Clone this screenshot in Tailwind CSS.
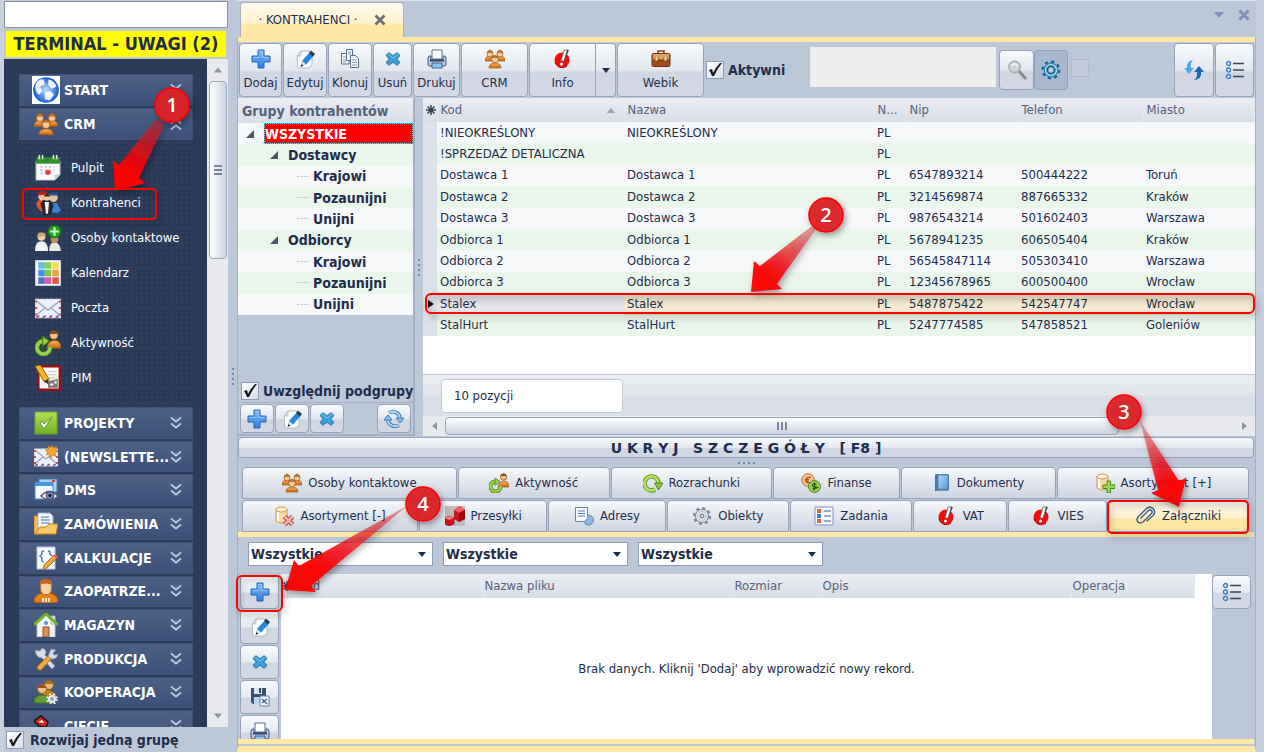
<!DOCTYPE html>
<html lang="pl">

<head>
    <meta charset="utf-8" />
    <meta content="width=device-width, initial-scale=1" name="viewport" />
    <title>Kontrahenci</title>
    <script src="https://cdn.jsdelivr.net/npm/@tailwindcss/browser@4"></script>
</head>

<body class="relative h-screen min-h-[752px] overflow-hidden bg-[#bcc7d8] font-['DejaVu_Sans_Condensed','Noto_Sans',sans-serif] text-[13px] leading-4 text-[#1e2d4b]">

    <!-- Icon sprite -->
    <svg class="absolute size-0" aria-hidden="true">
        <defs>
            <linearGradient id="gBlue" x1="0" y1="0" x2="0" y2="1"><stop offset="0" stop-color="#86bdf8" /><stop offset="1" stop-color="#2f7de0" /></linearGradient>
            <linearGradient id="gOrange" x1="0" y1="0" x2="0" y2="1"><stop offset="0" stop-color="#f6b765" /><stop offset="1" stop-color="#c9660f" /></linearGradient>
            <linearGradient id="gGreen" x1="0" y1="0" x2="0" y2="1"><stop offset="0" stop-color="#b5de5a" /><stop offset="1" stop-color="#6fb01f" /></linearGradient>
            <linearGradient id="gBook" x1="0" y1="0" x2="1" y2="1"><stop offset="0" stop-color="#b9e0fa" /><stop offset="1" stop-color="#4a95dc" /></linearGradient>
            <radialGradient id="gGlobe"><stop offset="0" stop-color="#bfe6ff" /><stop offset="1" stop-color="#1657d8" /></radialGradient>
        </defs>
        <symbol id="plus" viewBox="0 0 20 20"><path d="M7 1h6v6h6v6h-6v6H7v-6H1V7h6z" fill="url(#gBlue)" stroke="#2462c4" /><path d="M8.500 2.500h3v6h6M2.500 8.500h6" fill="none" stroke="#a9d2fd" opacity=".7" /></symbol>
        <symbol id="edit" viewBox="0 0 20 20"><path d="M6 2h9l2 3v11l-3 3H3L2 8z" fill="#fdfdfe" stroke="#b3b9c4" /><path d="M6 2v5H2z" fill="#d9dde4" stroke="#aab0bb" stroke-width=".6" /><path d="M6 17l1-5 8-9 4 3.500-8 9z" fill="#2488dd" /><path d="M14 4l2-2.500L20 5l-2.200 2.500z" fill="#2e3c50" /><path d="M6 17l1-5 4 3.500z" fill="#e3e9f2" /><path d="M5.500 18l1-3 2 1.700z" fill="#1d2a40" /></symbol>
        <symbol id="clone" viewBox="0 0 20 20"><g fill="#f6f8fb" stroke="#5c708e"><path d="M1.500 4.500h5V9H9v6H1.500z" /><path d="M6.500.500h6v11h-6z" /><path d="M10.500 6.500h5l3 3v9h-8z" /></g><path d="M12 11h5M12 13.500h5M12 16h5M8 3h3M8 5h3M3 8h3M3 11h3M3 13h3" stroke="#7e95b5" stroke-width="1" /></symbol>
        <symbol id="del" viewBox="0 0 20 20"><path d="M6 4l4 3 4-3 2.500 2.500-3 3.500 3 3.500L14 16l-4-3-4 3-2.500-2.500 3-3.500-3-3.500z" fill="#3fa2dc" stroke="#3689bd" stroke-width="1.500" stroke-linejoin="round" /><path d="M5.500 5.500L10 9l4.500-3.500" stroke="#7cc9f0" fill="none" /></symbol>
        <symbol id="print" viewBox="0 0 20 20"><path d="M2 7h2v4h12V7h2l1 2v7l-1 1H2l-1-1V9z" fill="#b9c8e2" stroke="#46587a" /><path d="M5 1h10v9H5z" fill="#fbfdff" stroke="#5b6e92" /><path d="M3 10.500h14v2H3z" fill="#33425e" /><path d="M5 14h10v5H5z" fill="#8dc5ee" stroke="#45628a" /></symbol>
        <symbol id="people" viewBox="0 0 20 20"><g fill="url(#gOrange)" stroke="#a35913" stroke-width=".7"><path d="M0 12q0-5 5-5h10q5 0 5 5z" /><path d="M4 19q0-5 6-5t6 5z" /></g><g fill="#f5cb96" stroke="#9c561a" stroke-width=".7"><circle cx="5" cy="5" r="3" /><circle cx="15" cy="5" r="3" /><circle cx="10" cy="10.500" r="3.300" /></g><path d="M2 4q3-6 6 0M12 4q3-6 6 0M6.500 9q3.500-5 7 0" fill="#c27a30" stroke="#9a5618" stroke-width=".7" /></symbol>
        <symbol id="info" viewBox="0 0 20 20"><circle cx="9" cy="11" r="7.500" fill="#f20d0d" /><path d="M2 13a7.500 7.500 0 0 0 12 4" stroke="#a80000" fill="none" /><path d="M11 1h4l-4 11H8z" fill="#f6f6f6" stroke="#666" stroke-width=".8" /><path d="M14 1h2l-5 11z" fill="#444" /><circle cx="8.500" cy="15" r="1.600" fill="#fff" /></symbol>
        <symbol id="case" viewBox="0 0 20 20"><path d="M7 5V2h6v3" fill="none" stroke="#86461a" stroke-width="1.600" /><rect x="1" y="4.500" width="18" height="13" rx="1.500" fill="#a24c1d" stroke="#743210" /><path d="M2 5h16v6H2z" fill="#dfa262" /><path d="M2 11h16" stroke="#6f300f" /><path d="M4 8v4h3V8M13 8v4h3V8" fill="#fbe7a8" stroke="#7c4a18" stroke-width=".8" /></symbol>
        <symbol id="search" viewBox="0 0 20 20"><path d="M12 11l6 7" stroke="#8b8b8b" stroke-width="3" stroke-linecap="round" /><circle cx="7.500" cy="7" r="5.700" fill="#cfd2d5" stroke="#a9acb0" stroke-width="1.500" /><path d="M4 6q3-4 7 0" stroke="#f4f4f4" stroke-width="1.500" fill="none" /></symbol>
        <symbol id="gearBlue" viewBox="0 0 20 20"><circle cx="10" cy="10" r="8.300" fill="none" stroke="#1a6288" stroke-width="2.400" stroke-dasharray="3.200 3.320" /><circle cx="10" cy="10" r="6.800" fill="#bfe0f0" stroke="#2b8dbb" stroke-width="1.400" /><circle cx="10" cy="10" r="3.700" fill="#bccadf" stroke="#11638c" stroke-width="2" /></symbol>
        <symbol id="gear" viewBox="0 0 20 20"><circle cx="10" cy="10" r="7.800" fill="none" stroke="#7d8798" stroke-width="2.500" stroke-dasharray="3 3.120" /><circle cx="10" cy="10" r="6.500" fill="#e9edf4" stroke="#768093" /><circle cx="10" cy="10" r="2" fill="#d0d6e2" stroke="#59657b" /><circle cx="10" cy="10" r="4.300" fill="none" stroke="#b3bccb" /></symbol>
        <symbol id="swap" viewBox="0 0 20 20"><path d="M9 0Q2 1 3 8H0l5 6 5-6H7Q6 3 9 0z" fill="#4aa9e8" /><path d="M10 20q8-1 7-8h3l-5-6-5 6h3q1 5-3 8z" fill="#1467b3" /></symbol>
        <symbol id="list" viewBox="0 0 20 20"><g fill="#dbe9fb" stroke="#3f77c8" stroke-width="1.300"><circle cx="3.500" cy="3.500" r="2" /><circle cx="3.500" cy="10" r="2" /><circle cx="3.500" cy="16.500" r="2" /></g><path d="M8 3.500h11M8 10h11M8 16.500h11" stroke="#3b465a" stroke-width="1.500" /></symbol>
        <symbol id="reload" viewBox="0 0 20 20"><g fill="none" stroke="#3b78b8" stroke-width="3.600"><path d="M5 4a7 6.500 0 0 1 11 5M15 16a7 6.500 0 0 1-11-5" /></g><g fill="none" stroke="#b5dbf6" stroke-width="1.800"><path d="M5 4a7 6.500 0 0 1 11 5M15 16a7 6.500 0 0 1-11-5" /></g><path d="M12 9h8l-4 5zM8 11H0l4-5z" fill="#8cc4ee" stroke="#3b78b8" /></symbol>
        <symbol id="activity" viewBox="0 0 20 20"><circle cx="14.500" cy="4" r="3.200" fill="#f3c18a" stroke="#8a4b17" stroke-width=".7" /><path d="M11 3q3.500-5 7 0z" fill="#8a4b17" /><path d="M9 14q1-6 6-6t5 6z" fill="url(#gOrange)" stroke="#9b530f" stroke-width=".7" /><path d="M6 8.500A5 5 0 1 0 11.500 13" fill="none" stroke="#4c8614" stroke-width="4" /><path d="M6 8.500A5 5 0 1 0 11.500 13" fill="none" stroke="#9bd245" stroke-width="2.600" /><path d="M6 5l5 3.500-5 4z" fill="#9bd245" stroke="#4c8614" stroke-width=".8" /></symbol>
        <symbol id="recycle" viewBox="0 0 20 20"><path d="M12 16.500A7 7 0 1 1 15.500 10" fill="none" stroke="#5b9119" stroke-width="4.400" /><path d="M12 16.500A7 7 0 1 1 15.500 10" fill="none" stroke="#b7e05f" stroke-width="2.800" /><path d="M11.500 10H20l-4.500 7z" fill="#8ccb36" stroke="#4f8616" /></symbol>
        <symbol id="coins" viewBox="0 0 20 20"><circle cx="7" cy="7" r="6.300" fill="#f7c29a" stroke="#c9702e" /><path d="M10 4.500q-5-1-5 2.500t5 2.500M4 6.500h4M4 8h4" fill="none" stroke="#a64b10" stroke-width="1.200" /><circle cx="13.500" cy="13.500" r="6" fill="#9ed04d" stroke="#4f8b1a" /><path d="M15.500 11.200q-4-1-4 1t4 2-4 1.600M13.500 9.500v8" fill="none" stroke="#2f5d0b" stroke-width="1.200" /></symbol>
        <symbol id="book" viewBox="0 0 20 20"><path d="M3 1h14v17H3z" fill="#eef4fb" stroke="#46617f" /><path d="M3 1h14v16H5q-2 0-2 2z" fill="url(#gBook)" stroke="#2e6aa8" /><path d="M3 1h3v17H3z" fill="#4e7aa5" /></symbol>
        <symbol id="db" viewBox="0 0 20 20"><path d="M2 3v12q5 4 11 0V3z" fill="#f7dca6" stroke="#cf9b50" /><ellipse cx="7.500" cy="3.500" rx="5.500" ry="2.500" fill="#fff3d6" stroke="#cf9b50" /><path d="M4 6v9" stroke="#fff" stroke-width="2" /></symbol>
        <symbol id="dbAdd" viewBox="0 0 20 20"><use href="#db" /><path d="M12 8h3.500v4H20v3.500h-4.500V20H12v-4.500H8V12h4z" fill="#9fd84a" stroke="#47851a" /></symbol>
        <symbol id="dbDel" viewBox="0 0 20 20"><use href="#db" /><path d="M10.500 10.500l8 8M18.500 10.500l-8 8" stroke="#b5302a" stroke-width="4.500" /><path d="M10.500 10.500l8 8M18.500 10.500l-8 8" stroke="#f3b6ae" stroke-width="2.500" /></symbol>
        <symbol id="boxes" viewBox="0 0 20 20"><path d="M0 0h20v20H0z" fill="#bdbdbd" /><path d="M9 4l6-4 5 4v9l-6 3-5-3z" fill="#d01220" /><path d="M9 4l6-4 5 4-6 3z" fill="#f25b5b" /><path d="M14 7v9l6-3V4z" fill="#9e0712" /><path d="M0 12l4-2 5 2v6l-5 2-4-2z" fill="#d01220" stroke="#7e0810" stroke-width=".6" /><path d="M0 12l4-2 5 2-5 2z" fill="#f58080" /></symbol>
        <symbol id="card" viewBox="0 0 20 20"><circle cx="14.500" cy="14" r="5" fill="#8fb7e6" stroke="#5e86bb" /><path d="M1.500 1.500h12v11l-3 3h-9z" fill="#f7faff" stroke="#6880b8" /><path d="M4 5h7M4 7.500h7M4 10h7" stroke="#5c77b5" /></symbol>
        <symbol id="tasks" viewBox="0 0 20 20"><path d="M1 1h18v18H1z" fill="#f8faff" stroke="#7d93c2" /><path d="M3 3h4v4H3z" fill="#e0663c" /><path d="M3 8h4v4H3z" fill="#3f87d8" /><path d="M3 13h4v4H3z" fill="#e0663c" /><path d="M10 5h7M10 10h7M10 15h7" stroke="#7c8fb8" stroke-width="1.300" /></symbol>
        <symbol id="clip" viewBox="0 0 20 20"><path d="M5 12l7-7q2-2 3.500-.500T15 8l-8 8q-3 2-5 0t0-5l8-8q4-3.500 7-.500t.500 6.500L11 15" fill="none" stroke="#44618a" stroke-width="1.500" stroke-linecap="round" /></symbol>
        <symbol id="save" viewBox="0 0 20 20"><path d="M1 1h15v16H3l-2-2z" fill="#3c4e6c" /><path d="M4 1h8v6H4z" fill="#dfe6f0" /><path d="M9 1h2v5H9z" fill="#33445f" /><path d="M4 10h9v7H4z" fill="#b5d7ee" /><path d="M10 9h9v10h-9z" fill="#eef4fa" stroke="#6b80a0" /><path d="M12 12l5 5M17 12l-5 4" stroke="#4a658c" stroke-width="1.300" /></symbol>
        <!-- sidebar icons -->
        <symbol id="globe" viewBox="0 0 24 24"><path d="M0 0h24v24H0z" fill="#fff" /><circle cx="12" cy="12" r="11" fill="url(#gGlobe)" /><path d="M3 7q3-5 7-4l1 4-4 2 2 4-3 3q-4-3-3-9M14 3q5 1 7 6l-4 2-3-3zM11 14l5-1 3 3-4 5-4-1z" fill="#fff" opacity=".9" /></symbol>
        <symbol id="cal" viewBox="0 0 24 24"><path d="M1 6h22v12l-5 5H1z" fill="#fafafa" stroke="#c7cfc9" /><path d="M1 2h22v6H1z" fill="#2f8d31" /><path d="M4 0v4M7 0v4M17 0v4M20 0v4" stroke="#dfe6df" stroke-width="1.500" /><path d="M5 11h13M5 14h13M5 17h10" stroke="#cdbfe0" stroke-width="1.500" stroke-dasharray="2 2" /><circle cx="12" cy="16" r="2.500" fill="#e24444" /><path d="M18 23v-5h5z" fill="#cbd0d8" /></symbol>
        <symbol id="contractors" viewBox="0 0 24 24"><path d="M1 13q1-4 6-4t6 6l-3 6q-7-1-9-8z" fill="#e8562c" /><circle cx="7" cy="6" r="4" fill="#f0c9a4" /><path d="M2 5q1-5 7-4l3 3z" fill="#c92020" /><circle cx="17" cy="7" r="4" fill="#ecc59b" /><path d="M13 5q4-6 9 0z" fill="#2659a5" /><path d="M14 12h6l4 7-3 2h-7z" fill="#3b83d1" /><path d="M5 13q2-6 7-4t5 6l-2 8H8z" fill="#26272c" /><circle cx="11" cy="7" r="3" fill="#f0cda8" /><path d="M8 6q3-5 6 0z" fill="#33231a" /><path d="M9 11h4l-1 11h-2z" fill="#f4f4f4" /></symbol>
        <symbol id="persons" viewBox="0 0 24 24"><path d="M0 24q0-9 6-9t6 9z" fill="#f3f3f0" /><path d="M13 24q0-8 5-8t6 8z" fill="#ece9e2" /><circle cx="6" cy="11" r="3.500" fill="#f0cfa5" /><path d="M2 11q0-5 4-4 4 0 4 3z" fill="#caa56c" /><circle cx="18" cy="13" r="3.500" fill="#c98c55" /><circle cx="18" cy="6" r="5.800" fill="#22a022" stroke="#137c13" /><path d="M18 2v8M14 6h8" stroke="#c7f7c0" stroke-width="2" /></symbol>
        <symbol id="kal" viewBox="0 0 24 24"><path d="M0 0h24v24H0z" fill="#f4f7fc" stroke="#9eb0d4" /><path d="M3 2h6v6H3z" fill="#5fc0d8" /><path d="M9 2h6v6H9z" fill="#8ed04a" /><path d="M16 2h6v6h-6z" fill="#f2dd51" /><path d="M3 9h6v6H3z" fill="#4d8fe0" /><path d="M9 9h6v6H9z" fill="#7ac943" /><path d="M16 9h6v6h-6z" fill="#f0a040" /><path d="M3 16h6v6H3z" fill="#5b6fc8" /><path d="M9 16h6v6H9z" fill="#dd5bab" /><path d="M16 16h6v6h-6z" fill="#e2583a" /></symbol>
        <symbol id="mail" viewBox="0 0 24 24"><path d="M.500 4h23v17H.500z" fill="#eef1f8" stroke="#d9dff0" /><path d="M1 20.500h22M1 5v15M23 5v15" stroke="#da4a3f" stroke-width="2" stroke-dasharray="2 4" /><path d="M2 19.500h21" stroke="#4b77c9" stroke-width="1.500" stroke-dasharray="2 4" /><path d="M2 6l10 8L22 6M2 18l7-6M22 18l-7-6" fill="none" stroke="#9aa7c2" stroke-width="1.300" /></symbol>
        <symbol id="mailNew" viewBox="0 0 24 24"><use href="#mail" /><path d="M18 0l1.500 3L23 1.500 21.500 5l2.500 1.500-3 1.500 1 3.500-3.500-1.500L17 13l-1.500-3.500L12 10l1.500-3L11 5l3.500-.500L14 1l3 1.500z" fill="#f4a52b" stroke="#c77b13" stroke-width=".6" /></symbol>
        <symbol id="pim" viewBox="0 0 24 24"><path d="M3 1h20v22H3z" fill="#fbf6f4" stroke="#8b1414" stroke-width="2.400" /><path d="M12 6h8M12 9h8M12 12h8" stroke="#c8c8c8" /><path d="M0 1l5-1 8 13-1 4-4-2z" fill="#f5b417" stroke="#805612" stroke-width=".8" /><path d="M8 15l4-2v4z" fill="#333" /><path d="M12 15l9-2v8h-9z" fill="#777" /><path d="M14 17h3v2h-3zM18 15h2v2h-2z" fill="#fff" /></symbol>
        <symbol id="check" viewBox="0 0 24 24"><path d="M1 1h22v22H1z" fill="url(#gGreen)" stroke="#6da826" /><path d="M6 12l4 6L18 6l-8 7-2-3z" fill="#f5f8ec" stroke="#6c8f42" /></symbol>
        <symbol id="dms" viewBox="0 0 24 24"><path d="M5 1h18v13H5z" fill="#a8d0f3" stroke="#477cb9" /><path d="M1 5h18v16H1z" fill="#f5f9fd" stroke="#4e86c2" /><path d="M1 4h18v4H1z" fill="#4697e0" /><path d="M18 3h3" stroke="#e03c30" stroke-width="2" /><path d="M7 18q8-9 17 0-8 8-17 0z" fill="#f6f6fa" stroke="#5d5b74" stroke-width="1.600" /><circle cx="16" cy="17.500" r="4" fill="#708dbd" stroke="#3a425b" /><circle cx="16" cy="17.500" r="1.700" fill="#1e2740" /></symbol>
        <symbol id="folder" viewBox="0 0 24 24"><path d="M0 4h9v18H0z" fill="#eebe57" stroke="#c88c24" /><path d="M4 1h12l3 3v14H4z" fill="#f6f9ff" stroke="#94aad1" /><path d="M7 5h8M7 8h9M7 11h9" stroke="#7d9fd6" stroke-width="1.500" /><path d="M1 22l5-7h6l3-3h9l-2 10z" fill="#f5c96a" stroke="#c98619" /></symbol>
        <symbol id="calc" viewBox="0 0 24 24"><path d="M3 1h18v22H3z" fill="#f4f7fc" stroke="#b6c6df" /><path d="M10 5q-3 0-2 3l-2 2 2 2q-1 4 2 4M14 5q3 0 2 3l2 2" fill="none" stroke="#5f7ab0" stroke-width="1.500" /><path d="M9 24l1-5L20 9l3 3-10 10z" fill="#f2a33c" stroke="#a4601b" stroke-width=".8" /><path d="M19 10l3-1.500 2 2-1.500 2.500z" fill="#e45b6b" /></symbol>
        <symbol id="worker" viewBox="0 0 24 24"><path d="M0 23q0-9 12-9t12 9q-12 3-24 0z" fill="#e78218" stroke="#b75a0a" /><path d="M6 5q6-8 12 0l-1 8q-5 6-10 0z" fill="#f6d1a0" stroke="#b6691e" /><path d="M6 6Q5 0 12 0t6 6q-6-3-12 0z" fill="#c56a1b" /><path d="M9 19v4M12 19v4M15 19v4" stroke="#fff" stroke-width="1.500" /></symbol>
        <symbol id="house" viewBox="0 0 24 24"><path d="M3 10l9-8 9 8v14H3z" fill="#f4f4f4" stroke="#b9bfc9" /><path d="M17 3h4v8h-4z" fill="#e6e6ea" stroke="#b0b4bf" /><path d="M0 12L12 1l12 11" fill="none" stroke="#71b32b" stroke-width="3" /><path d="M9 14h6v10H9z" fill="#d89450" stroke="#94541d" /><circle cx="12" cy="10" r="2" fill="#5d91d9" /></symbol>
        <symbol id="tools" viewBox="0 0 24 24"><path d="M1 3l5 1 2-3q6 2 3 7l10 11-3 3L8 11q-6 0-7-8z" fill="#d9dee8" stroke="#838da0" /><path d="M3 20L14 9l3 3L7 23q-3 1-4-3z" fill="#f0a93b" stroke="#b86f11" /><path d="M14 9l3-7 5 1-3 3 1 2 4-1q-1 6-7 5z" fill="#d3d9e4" stroke="#7b869b" stroke-width=".8" /></symbol>
        <symbol id="coop" viewBox="0 0 24 24"><path d="M9 14q4-8 12 0l2 4H9z" fill="#d0791d" /><circle cx="15" cy="5" r="4.500" fill="#e9b379" stroke="#a05c1f" /><path d="M10 4q5-7 10 0z" fill="#b06a26" /><path d="M0 23q0-8 8-8t9 8z" fill="#649d36" stroke="#3e7419" /><circle cx="8" cy="9" r="4.500" fill="#efc08c" stroke="#9e5a20" /><path d="M3 8q5-7 10 0z" fill="#9a531b" /><circle cx="18" cy="19" r="3" fill="#8ba0bf" stroke="#e5ebf3" stroke-width="2" /><circle cx="18" cy="19" r="5" fill="none" stroke="#e5ebf3" stroke-width="1.600" stroke-dasharray="2 2" /></symbol>
        <symbol id="cut" viewBox="0 0 24 24"><path d="M0 7l7-5 7 6-2 6-7-2z" fill="#d92323" stroke="#111" stroke-width="1.500" /><path d="M4 8l4-2 2 3z" fill="#fff" /><path d="M10 12l14 10-5 2L8 14z" fill="#eee" stroke="#222" /></symbol>
        <symbol id="chev" viewBox="0 0 12 14"><path d="M1 1.500l5 4 5-4M1 7.500l5 4 5-4" fill="none" stroke="#bcc8dc" stroke-width="1.800" /></symbol>
        <symbol id="tick" viewBox="0 0 18 18"><path d="M3 9l3-1 1 4q3-6 7-10h2Q11 8 8 15H6Q5 12 3 9z" fill="#161616" /></symbol>
        <symbol id="down" viewBox="0 0 10 6"><path d="M0 0h10L5 6z" fill="currentColor" /></symbol>
        <symbol id="x" viewBox="0 0 12 12"><path d="M1.500 1.500l9 9M10.500 1.500l-9 9" stroke="currentColor" stroke-width="3" /></symbol>
        <symbol id="ast" viewBox="0 0 10 10"><path d="M5 0v10M0 5h10M1.500 1.500l7 7M8.500 1.500l-7 7" stroke="#35425a" stroke-width="1.500" /></symbol>
    </svg>

    <div class="flex h-full border-l-4 border-[#c9d1df]">

        <!-- Sidebar -->
        <aside class="flex w-[224px] shrink-0 flex-col">
            <input type="text" aria-label="Szukaj w menu" class="mt-px h-[27px] w-full border border-[#8d929b] bg-white" />
            <h2 class="mx-0.5 mt-[3px] h-[26px] bg-[#ff0] text-center text-[18px] leading-[26px] font-bold whitespace-nowrap">TERMINAL - UWAGI (2)</h2>

            <div class="mt-0.5 flex min-h-0 flex-1">
                <nav class="flex-1 overflow-hidden bg-[#2b3a57] pt-[15px] pr-3.5 pl-[15px] text-white">
                    <div class="flex flex-col gap-0.5 text-[14px] font-bold">
                        <button class="flex h-8 items-center border border-[#405378] bg-linear-to-b from-[#4d6084] to-[#3d5078] pr-2.5 pl-3"><svg class="mr-1 size-7"><use href="#globe" /></svg><span class="flex-1 text-left">START</span><svg class="h-3.5 w-3"><use href="#chev" /></svg></button>
                        <button class="flex h-8 items-center border border-[#405378] bg-linear-to-b from-[#4d6084] to-[#3d5078] pr-2.5 pl-3.5"><svg class="mr-1.5 size-6"><use href="#people" /></svg><span class="flex-1 text-left">CRM</span><svg class="h-3.5 w-3 rotate-180"><use href="#chev" /></svg></button>
                    </div>
                    <div class="bg-[radial-gradient(#34456a_1px,transparent_1px)] bg-size-[5px_5px] pt-2.5 pb-3 pl-4">
                        <a href="#" class="flex h-[35px] items-center gap-2.5"><svg class="size-[26px]"><use href="#cal" /></svg>Pulpit</a>
                        <a href="#" class="flex h-[35px] items-center gap-2.5"><svg class="size-[26px]"><use href="#contractors" /></svg>Kontrahenci</a>
                        <a href="#" class="flex h-[35px] items-center gap-2.5 whitespace-nowrap"><svg class="size-[26px] shrink-0"><use href="#persons" /></svg>Osoby kontaktowe</a>
                        <a href="#" class="flex h-[35px] items-center gap-2.5"><svg class="size-[26px]"><use href="#kal" /></svg>Kalendarz</a>
                        <a href="#" class="flex h-[35px] items-center gap-2.5"><svg class="size-[26px]"><use href="#mail" /></svg>Poczta</a>
                        <a href="#" class="flex h-[35px] items-center gap-2.5"><svg class="size-[26px]"><use href="#activity" /></svg>Aktywność</a>
                        <a href="#" class="flex h-[35px] items-center gap-2.5"><svg class="size-[26px]"><use href="#pim" /></svg>PIM</a>
                    </div>
                    <div class="grid h-[335px] auto-rows-fr gap-0.5 text-[14px] font-bold">
                        <button class="flex items-center border border-[#405378] bg-linear-to-b from-[#4d6084] to-[#3d5078] pr-2.5 pl-3.5"><svg class="mr-1.5 size-6"><use href="#check" /></svg><span class="flex-1 text-left">PROJEKTY</span><svg class="h-3.5 w-3"><use href="#chev" /></svg></button>
                        <button class="flex items-center border border-[#405378] bg-linear-to-b from-[#4d6084] to-[#3d5078] pr-2.5 pl-3.5"><svg class="mr-1.5 size-6 shrink-0"><use href="#mailNew" /></svg><span class="flex-1 text-left whitespace-nowrap">(NEWSLETTE...</span><svg class="h-3.5 w-3 shrink-0"><use href="#chev" /></svg></button>
                        <button class="flex items-center border border-[#405378] bg-linear-to-b from-[#4d6084] to-[#3d5078] pr-2.5 pl-3.5"><svg class="mr-1.5 size-6"><use href="#dms" /></svg><span class="flex-1 text-left">DMS</span><svg class="h-3.5 w-3"><use href="#chev" /></svg></button>
                        <button class="flex items-center border border-[#405378] bg-linear-to-b from-[#4d6084] to-[#3d5078] pr-2.5 pl-3.5"><svg class="mr-1.5 size-6"><use href="#folder" /></svg><span class="flex-1 text-left">ZAMÓWIENIA</span><svg class="h-3.5 w-3"><use href="#chev" /></svg></button>
                        <button class="flex items-center border border-[#405378] bg-linear-to-b from-[#4d6084] to-[#3d5078] pr-2.5 pl-3.5"><svg class="mr-1.5 size-6"><use href="#calc" /></svg><span class="flex-1 text-left">KALKULACJE</span><svg class="h-3.5 w-3"><use href="#chev" /></svg></button>
                        <button class="flex items-center border border-[#405378] bg-linear-to-b from-[#4d6084] to-[#3d5078] pr-2.5 pl-3.5"><svg class="mr-1.5 size-6"><use href="#worker" /></svg><span class="flex-1 text-left">ZAOPATRZE...</span><svg class="h-3.5 w-3"><use href="#chev" /></svg></button>
                        <button class="flex items-center border border-[#405378] bg-linear-to-b from-[#4d6084] to-[#3d5078] pr-2.5 pl-3.5"><svg class="mr-1.5 size-6"><use href="#house" /></svg><span class="flex-1 text-left">MAGAZYN</span><svg class="h-3.5 w-3"><use href="#chev" /></svg></button>
                        <button class="flex items-center border border-[#405378] bg-linear-to-b from-[#4d6084] to-[#3d5078] pr-2.5 pl-3.5"><svg class="mr-1.5 size-6"><use href="#tools" /></svg><span class="flex-1 text-left">PRODUKCJA</span><svg class="h-3.5 w-3"><use href="#chev" /></svg></button>
                        <button class="flex items-center border border-[#405378] bg-linear-to-b from-[#4d6084] to-[#3d5078] pr-2.5 pl-3.5"><svg class="mr-1.5 size-6"><use href="#coop" /></svg><span class="flex-1 text-left">KOOPERACJA</span><svg class="h-3.5 w-3"><use href="#chev" /></svg></button>
                        <button class="flex items-center border border-[#405378] bg-linear-to-b from-[#4d6084] to-[#3d5078] pr-2.5 pl-3.5"><svg class="mr-1.5 size-6"><use href="#cut" /></svg><span class="flex-1 text-left">CIĘCIE</span><svg class="h-3.5 w-3"><use href="#chev" /></svg></button>
                    </div>
                </nav>
                <!-- scrollbar -->
                <div class="flex w-[21px] flex-col items-center bg-[#e8eaed]">
                    <div class="flex h-[22px] items-center"><svg class="h-1.5 w-2 rotate-180 text-[#8c95a7]"><use href="#down" /></svg></div>
                    <div class="flex h-[178px] w-[18px] flex-col items-center justify-center gap-0.5 rounded-sm border border-[#9ba6ba] bg-linear-to-r from-white to-[#ccd3e0]">
                        <span class="h-0.5 w-2 bg-[#7c879d]"></span><span class="h-0.5 w-2 bg-[#7c879d]"></span><span class="h-0.5 w-2 bg-[#7c879d]"></span>
                    </div>
                    <div class="mt-auto flex h-[22px] items-center"><svg class="h-1.5 w-2 text-[#8c95a7]"><use href="#down" /></svg></div>
                </div>
            </div>

            <label class="flex h-[25px] items-center gap-1.5 pl-0.5 text-[14px] font-bold">
                <span class="grid"><input type="checkbox" checked class="size-[18px] appearance-none border border-[#8f9bb0] bg-linear-to-br from-white to-[#d9dee8] [grid-area:1/1]" /><svg class="pointer-events-none size-[18px] [grid-area:1/1]"><use href="#tick" /></svg></span>
                Rozwijaj jedną grupę
            </label>
        </aside>

        <!-- Splitter -->
        <div class="flex w-[9px] shrink-0 flex-col items-center justify-center gap-[3px]">
            <span class="size-0.5 bg-[#7388ab]"></span><span class="size-0.5 bg-[#7388ab]"></span><span class="size-0.5 bg-[#7388ab]"></span><span class="size-0.5 bg-[#7388ab]"></span>
        </div>

        <!-- Main window -->
        <main class="flex min-w-0 flex-1 flex-col border-r-8 border-[#c7cfde]">
            <div class="flex h-[37px] items-end border-t border-[#dbe2ec] pl-[3px]">
                <div class="flex h-[35px] w-[164px] items-center justify-center gap-4 rounded-t border border-b-0 border-[#a9b0bd] bg-[linear-gradient(#fffaf0,#fff1cd_60%,#ffe8a6_65%)]">
                    <span>· KONTRAHENCI ·</span>
                    <button aria-label="Zamknij kartę" class="text-[#707479]"><svg class="size-3"><use href="#x" /></svg></button>
                </div>
                <div class="mr-1.5 mb-4 ml-auto flex items-center gap-3.5 text-[#7f90b3]">
                    <button aria-label="Lista kart"><svg class="h-1.5 w-2.5"><use href="#down" /></svg></button>
                    <button aria-label="Zamknij"><svg class="size-3"><use href="#x" /></svg></button>
                </div>
            </div>

            <div class="flex min-h-0 flex-1 flex-col border-x border-b-[6px] border-x-[#a3b0c6] border-b-[#ffe8a6]">
                <div class="h-[5px] shrink-0 bg-[#ffe8a6]"></div>

                <!-- Toolbar -->
                <div class="flex h-14 shrink-0 items-center gap-px px-px">
                    <button class="flex h-[54px] w-[43px] flex-col items-center justify-center gap-1.5 rounded-sm border border-[#98a3b7] bg-[linear-gradient(#f8fafc,#e3e8ef_50%,#cfd5e1_55%,#d3d8e4)]"><svg class="size-5"><use href="#plus" /></svg>Dodaj</button>
                    <button class="flex h-[54px] w-11 flex-col items-center justify-center gap-1.5 rounded-sm border border-[#98a3b7] bg-[linear-gradient(#f8fafc,#e3e8ef_50%,#cfd5e1_55%,#d3d8e4)]"><svg class="size-5"><use href="#edit" /></svg>Edytuj</button>
                    <button class="flex h-[54px] w-11 flex-col items-center justify-center gap-1.5 rounded-sm border border-[#98a3b7] bg-[linear-gradient(#f8fafc,#e3e8ef_50%,#cfd5e1_55%,#d3d8e4)]"><svg class="size-5"><use href="#clone" /></svg>Klonuj</button>
                    <button class="flex h-[54px] w-[39px] flex-col items-center justify-center gap-1.5 rounded-sm border border-[#98a3b7] bg-[linear-gradient(#f8fafc,#e3e8ef_50%,#cfd5e1_55%,#d3d8e4)]"><svg class="size-5"><use href="#del" /></svg>Usuń</button>
                    <button class="flex h-[54px] w-[47px] flex-col items-center justify-center gap-1.5 rounded-sm border border-[#98a3b7] bg-[linear-gradient(#f8fafc,#e3e8ef_50%,#cfd5e1_55%,#d3d8e4)]"><svg class="size-5"><use href="#print" /></svg>Drukuj</button>
                    <button class="flex h-[54px] w-[67px] flex-col items-center justify-center gap-1.5 rounded-sm border border-[#98a3b7] bg-[linear-gradient(#f8fafc,#e3e8ef_50%,#cfd5e1_55%,#d3d8e4)]"><svg class="size-5"><use href="#people" /></svg>CRM</button>
                    <div class="flex">
                        <button class="flex h-[54px] w-[67px] flex-col items-center justify-center gap-1.5 rounded-l-sm border border-[#98a3b7] bg-[linear-gradient(#f8fafc,#e3e8ef_50%,#cfd5e1_55%,#d3d8e4)]"><svg class="size-5"><use href="#info" /></svg>Info</button>
                        <button aria-label="Więcej" class="flex h-[54px] w-5 items-center justify-center rounded-r-sm border border-l-0 border-[#98a3b7] bg-[linear-gradient(#f8fafc,#e3e8ef_50%,#cfd5e1_55%,#d3d8e4)]"><svg class="h-[5px] w-2"><use href="#down" /></svg></button>
                    </div>
                    <button class="flex h-[54px] w-[87px] flex-col items-center justify-center gap-1.5 rounded-sm border border-[#98a3b7] bg-[linear-gradient(#f8fafc,#e3e8ef_50%,#cfd5e1_55%,#d3d8e4)]"><svg class="size-5"><use href="#case" /></svg>Webik</button>
                    <label class="ml-px flex items-center gap-1 text-[14px] font-bold">
                        <span class="grid"><input type="checkbox" checked class="size-[18px] appearance-none border border-[#8f9bb0] bg-linear-to-br from-white to-[#d9dee8] [grid-area:1/1]" /><svg class="pointer-events-none size-[18px] [grid-area:1/1]"><use href="#tick" /></svg></span>
                        Aktywni
                    </label>
                    <div class="ml-auto flex items-center">
                        <input type="text" aria-label="Szukaj" class="mb-1.5 h-10 w-[186px] bg-[#efefef]" />
                        <button aria-label="Szukaj" class="ml-[3px] flex h-10 w-[35px] items-center justify-center rounded-sm border border-[#98a3b7] bg-[linear-gradient(#f8fafc,#e3e8ef_50%,#cfd5e1_55%,#d3d8e4)]"><svg class="size-5"><use href="#search" /></svg></button>
                        <button aria-label="Ustawienia" class="flex h-10 w-[34px] items-center justify-center rounded-sm border border-[#94a2ba] bg-[#a9b7cf]"><svg class="size-5"><use href="#gearBlue" /></svg></button>
                        <input type="checkbox" disabled aria-label="Opcja" class="mr-[85px] mb-1 ml-[3px] size-[18px] appearance-none border border-[#b0bbcf] bg-[#c0cadb]" />
                        <button aria-label="Odśwież" class="mr-px flex h-[54px] w-10 items-center justify-center rounded-sm border border-[#98a3b7] bg-[linear-gradient(#f8fafc,#e3e8ef_50%,#cfd5e1_55%,#d3d8e4)]"><svg class="size-5"><use href="#swap" /></svg></button>
                        <button aria-label="Widok listy" class="flex h-[54px] w-[39px] items-center justify-center rounded-sm border border-[#98a3b7] bg-[linear-gradient(#f8fafc,#e3e8ef_50%,#cfd5e1_55%,#d3d8e4)]"><svg class="size-5"><use href="#list" /></svg></button>
                    </div>
                </div>

                <div class="flex h-[338px] shrink-0">
                    <!-- Group tree -->
                    <section class="flex w-[177px] shrink-0 flex-col border-r-2 border-b-2 border-[#a3b0c6] text-[14px] font-bold">
                        <h3 class="h-[25px] bg-linear-to-b from-[#ebeef2] to-[#d8dde7] pl-1 leading-[26px] text-[#55627b]">Grupy kontrahentów</h3>
                        <ul class="grid h-48 auto-rows-fr">
                            <li class="flex items-center gap-2.5 bg-[#f6f7f9] pl-2"><svg class="size-2" viewBox="0 0 8 8"><path d="M8 0v8H0z" fill="#4e5666" /></svg><span class="flex h-full flex-1 items-center border border-dotted border-[#0ff] bg-[#f00] text-white">WSZYSTKIE</span></li>
                            <li class="flex items-center gap-2.5 bg-[#eaf6ec] pl-8"><svg class="size-2" viewBox="0 0 8 8"><path d="M8 0v8H0z" fill="#4e5666" /></svg>Dostawcy</li>
                            <li class="flex items-center gap-1 bg-[#f6f7f9] pl-[59px]"><span class="w-3 border-t border-dotted border-[#b4bac6]"></span>Krajowi</li>
                            <li class="flex items-center gap-1 bg-[#eaf6ec] pl-[59px]"><span class="w-3 border-t border-dotted border-[#b4bac6]"></span>Pozaunijni</li>
                            <li class="flex items-center gap-1 bg-[#f6f7f9] pl-[59px]"><span class="w-3 border-t border-dotted border-[#b4bac6]"></span>Unijni</li>
                            <li class="flex items-center gap-2.5 bg-[#eaf6ec] pl-8"><svg class="size-2" viewBox="0 0 8 8"><path d="M8 0v8H0z" fill="#4e5666" /></svg>Odbiorcy</li>
                            <li class="flex items-center gap-1 bg-[#f6f7f9] pl-[59px]"><span class="w-3 border-t border-dotted border-[#b4bac6]"></span>Krajowi</li>
                            <li class="flex items-center gap-1 bg-[#eaf6ec] pl-[59px]"><span class="w-3 border-t border-dotted border-[#b4bac6]"></span>Pozaunijni</li>
                            <li class="flex items-center gap-1 bg-[#f6f7f9] pl-[59px]"><span class="w-3 border-t border-dotted border-[#b4bac6]"></span>Unijni</li>
                        </ul>
                        <label class="mt-auto mb-0.5 flex items-center gap-1 pl-[3px] whitespace-nowrap">
                            <span class="grid"><input type="checkbox" checked class="size-[18px] appearance-none border border-[#8f9bb0] bg-linear-to-br from-white to-[#d9dee8] [grid-area:1/1]" /><svg class="pointer-events-none size-[18px] [grid-area:1/1]"><use href="#tick" /></svg></span>
                            Uwzględnij podgrupy
                        </label>
                        <div class="flex gap-px border-t border-[#a3b0c6] px-0.5 py-px">
                            <button aria-label="Dodaj grupę" class="flex h-[29px] w-[34px] items-center justify-center rounded-sm border border-[#98a3b7] bg-[linear-gradient(#f8fafc,#e3e8ef_50%,#cfd5e1_55%,#d3d8e4)]"><svg class="size-5"><use href="#plus" /></svg></button>
                            <button aria-label="Edytuj grupę" class="flex h-[29px] w-[34px] items-center justify-center rounded-sm border border-[#98a3b7] bg-[linear-gradient(#f8fafc,#e3e8ef_50%,#cfd5e1_55%,#d3d8e4)]"><svg class="size-5"><use href="#edit" /></svg></button>
                            <button aria-label="Usuń grupę" class="flex h-[29px] w-[34px] items-center justify-center rounded-sm border border-[#98a3b7] bg-[linear-gradient(#f8fafc,#e3e8ef_50%,#cfd5e1_55%,#d3d8e4)]"><svg class="size-5"><use href="#del" /></svg></button>
                            <button aria-label="Odśwież grupy" class="ml-auto flex h-[29px] w-[34px] items-center justify-center rounded-sm border border-[#98a3b7] bg-[linear-gradient(#f8fafc,#e3e8ef_50%,#cfd5e1_55%,#d3d8e4)]"><svg class="size-5"><use href="#reload" /></svg></button>
                        </div>
                    </section>

                    <div class="flex w-2 shrink-0 flex-col items-center justify-center gap-[3px]">
                        <span class="size-0.5 bg-[#7388ab]"></span><span class="size-0.5 bg-[#7388ab]"></span><span class="size-0.5 bg-[#7388ab]"></span><span class="size-0.5 bg-[#7388ab]"></span>
                    </div>

                    <!-- Contractors grid -->
                    <section class="flex min-w-0 flex-1 flex-col bg-white">
                        <table class="h-[238px] w-full table-fixed text-left [&_td]:p-0 [&_td]:pl-[3px] [&_th]:p-0 [&_th]:pl-[3px]">
                            <colgroup><col class="w-3.5" /><col class="w-[187px]" /><col class="w-[250px]" /><col class="w-8" /><col class="w-[112px]" /><col class="w-[125px]" /><col /></colgroup>
                            <thead>
                                <tr class="h-6 bg-linear-to-b from-[#ebeef2] to-[#d8dde7] text-[#56627b] *:border-r *:border-[#e3e7ee] *:font-normal">
                                    <th><svg class="size-2.5"><use href="#ast" /></svg></th>
                                    <th><div class="flex items-center justify-between pr-2">Kod<svg class="h-[5px] w-2.5 rotate-180 text-[#9aa3b1]"><use href="#down" /></svg></div></th>
                                    <th>Nazwa</th><th>N...</th><th>Nip</th><th>Telefon</th><th>Miasto</th>
                                </tr>
                            </thead>
                            <tbody>
                                <tr class="bg-[#f5f7f9]"><td class="bg-[#dde1e9]"></td><td>!NIEOKREŚLONY</td><td>NIEOKREŚLONY</td><td>PL</td><td></td><td></td><td></td></tr>
                                <tr class="bg-[#eaf6ec]"><td class="bg-[#dde1e9]"></td><td>!SPRZEDAŻ DETALICZNA</td><td></td><td>PL</td><td></td><td></td><td></td></tr>
                                <tr class="bg-[#f5f7f9]"><td class="bg-[#dde1e9]"></td><td>Dostawca 1</td><td>Dostawca 1</td><td>PL</td><td>6547893214</td><td>500444222</td><td>Toruń</td></tr>
                                <tr class="bg-[#eaf6ec]"><td class="bg-[#dde1e9]"></td><td>Dostawca 2</td><td>Dostawca 2</td><td>PL</td><td>3214569874</td><td>887665332</td><td>Kraków</td></tr>
                                <tr class="bg-[#f5f7f9]"><td class="bg-[#dde1e9]"></td><td>Dostawca 3</td><td>Dostawca 3</td><td>PL</td><td>9876543214</td><td>501602403</td><td>Warszawa</td></tr>
                                <tr class="bg-[#eaf6ec]"><td class="bg-[#dde1e9]"></td><td>Odbiorca 1</td><td>Odbiorca 1</td><td>PL</td><td>5678941235</td><td>606505404</td><td>Kraków</td></tr>
                                <tr class="bg-[#f5f7f9]"><td class="bg-[#dde1e9]"></td><td>Odbiorca 2</td><td>Odbiorca 2</td><td>PL</td><td>56545847114</td><td>505303410</td><td>Warszawa</td></tr>
                                <tr class="bg-[#eaf6ec]"><td class="bg-[#dde1e9]"></td><td>Odbiorca 3</td><td>Odbiorca 3</td><td>PL</td><td>12345678965</td><td>600500400</td><td>Wrocław</td></tr>
                                <tr class="bg-linear-to-b from-[#e6dcc0] to-[#fbf0db]"><td class="bg-[#dde1e9]"><svg class="ml-0.5 h-2 w-1.5" viewBox="0 0 6 8"><path d="M0 0l6 4-6 4z" fill="#111" /></svg></td><td class="bg-linear-to-b from-[#d9dbe0] to-[#eceef1]">Stalex</td><td>Stalex</td><td>PL</td><td>5487875422</td><td>542547747</td><td>Wrocław</td></tr>
                                <tr class="bg-[#eaf6ec]"><td class="bg-[#dde1e9]"></td><td>StalHurt</td><td>StalHurt</td><td>PL</td><td>5247774585</td><td>547858521</td><td>Goleniów</td></tr>
                            </tbody>
                        </table>
                        <div class="mt-auto flex h-[42px] items-center border-t border-[#bdc6d4] bg-[linear-gradient(#e9edf1,#e2e5eb_48%,#dadee7_52%)] pl-[18px]">
                            <div class="flex h-[34px] w-[182px] items-center rounded-sm border border-[#c3cad6] bg-white pl-3">10 pozycji</div>
                        </div>
                        <div class="flex h-5 items-center bg-[#e8eaed]">
                            <div class="flex w-[22px] justify-center"><svg class="h-2 w-[5px]" viewBox="0 0 5 8"><path d="M5 0v8L0 4z" fill="#8c95a7" /></svg></div>
                            <div class="flex h-[18px] w-[674px] items-center justify-center gap-0.5 rounded-sm border border-[#9ba6ba] bg-linear-to-b from-white to-[#ccd3e0]">
                                <span class="h-2 w-0.5 bg-[#7c879d]"></span><span class="h-2 w-0.5 bg-[#7c879d]"></span><span class="h-2 w-0.5 bg-[#7c879d]"></span>
                            </div>
                            <div class="ml-auto flex w-[22px] justify-center"><svg class="h-2 w-[5px]" viewBox="0 0 5 8"><path d="M0 0v8l5-4z" fill="#8c95a7" /></svg></div>
                        </div>
                    </section>
                </div>

                <button class="mt-px mr-px h-[21px] shrink-0 rounded-sm border border-[#98a3b7] bg-[linear-gradient(#f8fafc,#e3e8ef_50%,#cfd5e1_55%,#d3d8e4)] font-['DejaVu_Sans',sans-serif] text-[14px] leading-[18px] font-bold whitespace-pre">U K R Y J   S Z C Z E G Ó Ł Y   [ F8 ]</button>
                <div class="flex h-[9px] shrink-0 items-center justify-center gap-[3px]">
                    <span class="size-0.5 bg-[#7388ab]"></span><span class="size-0.5 bg-[#7388ab]"></span><span class="size-0.5 bg-[#7388ab]"></span><span class="size-0.5 bg-[#7388ab]"></span>
                </div>

                <!-- Detail tabs -->
                <div class="flex shrink-0 flex-col gap-px pr-1.5 pl-1">
                    <div class="flex h-8 gap-px *:flex *:min-w-0 *:items-center *:justify-center *:gap-1.5 *:rounded-t *:border *:border-[#98a3b7] *:bg-[linear-gradient(#f6f8fa,#dfe3eb_55%,#cdd4e0)] *:whitespace-nowrap">
                        <button class="grow-[216] basis-0"><svg class="size-5 shrink-0"><use href="#people" /></svg>Osoby kontaktowe</button>
                        <button class="grow-[152] basis-0"><svg class="size-5 shrink-0"><use href="#activity" /></svg>Aktywność</button>
                        <button class="grow-[162] basis-0"><svg class="size-5 shrink-0"><use href="#recycle" /></svg>Rozrachunki</button>
                        <button class="grow-[127] basis-0"><svg class="size-5 shrink-0"><use href="#coins" /></svg>Finanse</button>
                        <button class="grow-[155] basis-0"><svg class="size-[18px] shrink-0"><use href="#book" /></svg>Dokumenty</button>
                        <button class="grow-[193] basis-0"><svg class="size-5 shrink-0"><use href="#dbAdd" /></svg>Asortyment [+]</button>
                    </div>
                    <div class="flex h-8 gap-px *:flex *:min-w-0 *:items-center *:justify-center *:gap-1.5 *:rounded-t *:border *:border-[#98a3b7] *:whitespace-nowrap">
                        <button class="grow-[178] basis-0 bg-[linear-gradient(#f6f8fa,#dfe3eb_55%,#cdd4e0)]"><svg class="size-5 shrink-0"><use href="#dbDel" /></svg>Asortyment [-]</button>
                        <button class="grow-[129] basis-0 bg-[linear-gradient(#f6f8fa,#dfe3eb_55%,#cdd4e0)]"><svg class="size-5 shrink-0"><use href="#boxes" /></svg>Przesyłki</button>
                        <button class="grow-[118] basis-0 bg-[linear-gradient(#f6f8fa,#dfe3eb_55%,#cdd4e0)]"><svg class="size-5 shrink-0"><use href="#card" /></svg>Adresy</button>
                        <button class="grow-[123] basis-0 bg-[linear-gradient(#f6f8fa,#dfe3eb_55%,#cdd4e0)]"><svg class="size-5 shrink-0"><use href="#gear" /></svg>Obiekty</button>
                        <button class="grow-[123] basis-0 bg-[linear-gradient(#f6f8fa,#dfe3eb_55%,#cdd4e0)]"><svg class="size-5 shrink-0"><use href="#tasks" /></svg>Zadania</button>
                        <button class="grow-[94] basis-0 bg-[linear-gradient(#f6f8fa,#dfe3eb_55%,#cdd4e0)]"><svg class="size-5 shrink-0"><use href="#info" /></svg>VAT</button>
                        <button class="grow-[99] basis-0 bg-[linear-gradient(#f6f8fa,#dfe3eb_55%,#cdd4e0)]"><svg class="size-5 shrink-0"><use href="#info" /></svg>VIES</button>
                        <button class="grow-[142] basis-0 bg-[linear-gradient(#fffaf0,#fff1cd_55%,#ffe8a6_60%)]"><svg class="size-5 shrink-0"><use href="#clip" /></svg>Załączniki</button>
                    </div>
                </div>

                <!-- Attachments -->
                <div class="mb-0.5 mr-px flex min-h-0 flex-1 flex-col border-y-[5px] border-[#ffe8a6]">
                    <div class="flex gap-2.5 px-2.5 pt-[5px] pb-2 text-[14px] font-bold">
                        <div class="grid w-[185px] items-center"><select aria-label="Filtr 1" class="h-6 w-full appearance-none border border-[#8f9bb0] bg-white px-0.5 [grid-area:1/1]"><option>Wszystkie</option></select><svg class="pointer-events-none mr-[7px] h-[5px] w-2 justify-self-end [grid-area:1/1]"><use href="#down" /></svg></div>
                        <div class="grid w-[185px] items-center"><select aria-label="Filtr 2" class="h-6 w-full appearance-none border border-[#8f9bb0] bg-white px-0.5 [grid-area:1/1]"><option>Wszystkie</option></select><svg class="pointer-events-none mr-[7px] h-[5px] w-2 justify-self-end [grid-area:1/1]"><use href="#down" /></svg></div>
                        <div class="grid w-[185px] items-center"><select aria-label="Filtr 3" class="h-6 w-full appearance-none border border-[#8f9bb0] bg-white px-0.5 [grid-area:1/1]"><option>Wszystkie</option></select><svg class="pointer-events-none mr-[7px] h-[5px] w-2 justify-self-end [grid-area:1/1]"><use href="#down" /></svg></div>
                    </div>
                    <div class="flex min-h-0 flex-1 overflow-hidden">
                        <div class="flex w-[43px] shrink-0 flex-col gap-px px-0.5 pt-px *:flex *:h-[34px] *:shrink-0 *:items-center *:justify-center *:rounded-sm *:border *:border-[#98a3b7] *:bg-[linear-gradient(#f8fafc,#e3e8ef_50%,#cfd5e1_55%,#d3d8e4)]">
                            <button aria-label="Dodaj"><svg class="size-5"><use href="#plus" /></svg></button>
                            <button aria-label="Edytuj"><svg class="size-5"><use href="#edit" /></svg></button>
                            <button aria-label="Usuń"><svg class="size-5"><use href="#del" /></svg></button>
                            <button aria-label="Zapisz"><svg class="size-5"><use href="#save" /></svg></button>
                            <button aria-label="Drukuj"><svg class="size-5"><use href="#print" /></svg></button>
                        </div>
                        <div class="flex min-w-0 flex-1 flex-col bg-white">
                            <div class="pr-[17px]">
                                <table class="w-full table-fixed text-left">
                                    <colgroup><col class="w-4" /><col class="w-[186px]" /><col class="w-[250px]" /><col class="w-[88px]" /><col class="w-[250px]" /><col /></colgroup>
                                    <thead>
                                        <tr class="h-6 bg-linear-to-b from-[#ebeef2] to-[#d8dde7] text-[#56627b] *:border-r *:border-[#e3e7ee] *:p-0 *:pl-px *:font-normal">
                                            <th><svg class="size-2.5"><use href="#ast" /></svg></th><th>Kod</th><th>Nazwa pliku</th><th>Rozmiar</th><th>Opis</th><th>Operacja</th>
                                        </tr>
                                    </thead>
                                </table>
                            </div>
                            <p class="flex flex-1 items-center justify-center">Brak danych. Kliknij 'Dodaj' aby wprowadzić nowy rekord.</p>
                        </div>
                        <div class="w-[42px] shrink-0 pt-px">
                            <button aria-label="Widok listy" class="flex h-[34px] w-[39px] items-center justify-center rounded-sm border border-[#98a3b7] bg-[linear-gradient(#f8fafc,#e3e8ef_50%,#cfd5e1_55%,#d3d8e4)]"><svg class="size-5"><use href="#list" /></svg></button>
                        </div>
                    </div>
                </div>
            </div>
        </main>
    </div>

    <!-- Step markers -->
    <svg class="pointer-events-none absolute top-0 left-0 h-[752px] w-[1264px] font-['Open_Sans',sans-serif] text-[20px] font-semibold" viewBox="0 0 1264 752">
        <defs>
            <linearGradient id="a1" gradientUnits="userSpaceOnUse" x1="162" y1="120" x2="115" y2="191"><stop offset="0" stop-color="#d01828" stop-opacity=".5" /><stop offset=".75" stop-color="#f00" /></linearGradient>
            <linearGradient id="a2" gradientUnits="userSpaceOnUse" x1="815" y1="228" x2="751" y2="292"><stop offset="0" stop-color="#d01828" stop-opacity=".35" /><stop offset=".75" stop-color="#f00" stop-opacity=".95" /></linearGradient>
            <linearGradient id="a3" gradientUnits="userSpaceOnUse" x1="1140" y1="421" x2="1179" y2="507"><stop offset="0" stop-color="#d01828" stop-opacity=".3" /><stop offset=".75" stop-color="#f00" stop-opacity=".95" /></linearGradient>
            <linearGradient id="a4" gradientUnits="userSpaceOnUse" x1="407" y1="507" x2="285" y2="590"><stop offset="0" stop-color="#d01828" stop-opacity=".4" /><stop offset=".75" stop-color="#f00" stop-opacity=".95" /></linearGradient>
            <filter id="sh" x="-30%" y="-30%" width="160%" height="160%"><feDropShadow dx="2" dy="3" stdDeviation="3" flood-opacity=".4" /></filter>
        </defs>
        <g filter="url(#sh)">
            <path d="M156 119l9 4-26 55 6 5-30 8-2-31 6 5z" fill="url(#a1)" />
            <path d="M812 226l4 3-39 55 5 5-31 3 3-31 6 5z" fill="url(#a2)" />
            <path d="M1140 421l39 60 7-3-7 29-28-14 7-3z" fill="url(#a3)" />
            <path d="M407 506L311 586l5 6-31-2 9-30 5 6z" fill="url(#a4)" />
        </g>
        <g fill="none" stroke="#f00" stroke-width="2" filter="url(#sh)">
            <rect x="23" y="189" width="133" height="30" rx="4" />
            <rect x="426" y="294" width="828" height="19" rx="5" />
            <rect x="1108" y="501" width="140" height="32" rx="4" />
            <rect x="237" y="576" width="45" height="35" rx="5" />
        </g>
        <g fill="#dc2228" fill-opacity=".95" stroke="#f00" stroke-width="1.500" filter="url(#sh)">
            <circle cx="172" cy="105" r="17" />
            <circle cx="826" cy="215" r="17" />
            <circle cx="1124" cy="412" r="17" />
            <circle cx="423" cy="504" r="17" />
        </g>
        <g fill="#fff" text-anchor="middle">
            <text x="172" y="112">1</text>
            <text x="826" y="222">2</text>
            <text x="1124" y="419">3</text>
            <text x="423" y="511">4</text>
        </g>
    </svg>
</body>

</html>
